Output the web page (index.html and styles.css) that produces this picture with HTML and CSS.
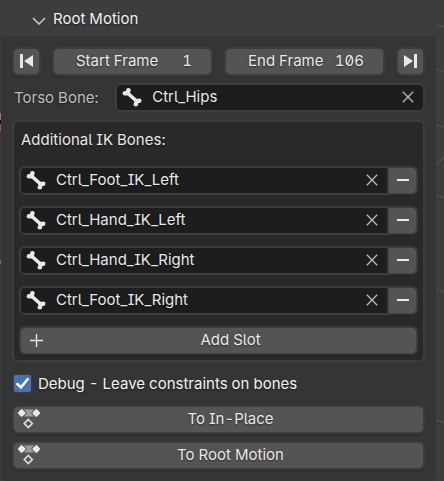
FILE: index.html
```html
<!DOCTYPE html>
<html lang="en">
<head>
<meta charset="utf-8">
<title>Root Motion</title>
<link rel="stylesheet" href="styles.css">
</head>
<body>
<svg class="defs" aria-hidden="true">
  <symbol id="bone" viewBox="0 0 20 20"><path d="M5.5 6 15 14.5" stroke="currentColor" stroke-width="3.6"/><g fill="currentColor"><circle cx="6.4" cy="3.2" r="2.3"/><circle cx="2.9" cy="6.2" r="2.3"/><circle cx="17.2" cy="13.8" r="2.3"/><circle cx="13.8" cy="17.2" r="2.3"/><path d="M3 4.500 6.500 3 8.500 6 6 8.500 3 8.300zM12 14.500 14.500 11.800 17.500 12 17 16 14 17.500z"/></g></symbol>
  <symbol id="cross" viewBox="0 0 12 12"><path d="M.8.8 11.200 11.200M11.200.8.8 11.200" stroke="currentColor" stroke-width="1.300"/></symbol>
  <symbol id="minus" viewBox="0 0 12 12"><path d="M0 6h12" stroke="currentColor" stroke-width="2"/></symbol>
  <symbol id="keys" viewBox="0 0 22 20"><path d="M4 .5h14v7H4z" fill="#9c9c9c"/><path d="M3.500 0h2L9 4 5.500 8h-2zM18.500 0h-2L13 4l3.500 4h2z" fill="#505050"/><path d="M3 .3h1.200L7.500 3.400v1.200L4.200 7.700H3L0 4.600V3.400zM17.800.3H19l3 3.100v1.200l-3 3.100h-1.200l-3.300-3.100V3.400z" fill="#eaeaea"/><path d="M10.300 10.500 14.300 14.500l-4 4-4-4z" fill="none" stroke="#dedede" stroke-width="1.700"/></symbol>
</svg>
<main class="viewport">
  <svg class="grid-lines" viewBox="0 0 8 481" preserveAspectRatio="none" aria-hidden="true"><path d="M0 25l8 2M0 69l8 3M0 125l8 2M0 165l8-8M0 195l8 3M0 289l8 3M0 420l8 3" stroke="#4b4b4b" stroke-width="2"/></svg>
  <section class="panel">
    <h1 class="header"><svg class="chevron" viewBox="0 0 14 8" aria-hidden="true"><path d="M1 1l6 6 6-6" fill="none" stroke="currentColor" stroke-width="1.500"/></svg>Root Motion</h1>
    <div class="content">
      <div class="row frames">
        <button class="btn square" aria-label="Jump to start"><svg viewBox="0 0 13 14"><path d="M0 0h3v14H0zM13 1v12L4 7z" fill="currentColor"/></svg></button>
        <label class="btn number">Start Frame<input type="text" value="1"></label>
        <label class="btn number">End Frame<input type="text" value="106"></label>
        <button class="btn square" aria-label="Jump to end"><svg viewBox="0 0 13 14"><path d="M10 0h3v14h-3zM0 1v12l9-6z" fill="currentColor"/></svg></button>
      </div>
      <div class="row torso">
        <label class="muted" for="torso">Torso Bone:</label>
        <div class="field"><svg class="bone"><use href="#bone"/></svg><input id="torso" type="text" value="Ctrl_Hips"><button class="clear" aria-label="Clear"><svg><use href="#cross"/></svg></button></div>
      </div>
      <div class="box">
        <h2>Additional IK Bones:</h2>
        <div class="slots">
          <div class="slot"><div class="field"><svg class="bone"><use href="#bone"/></svg><input type="text" aria-label="Bone 1" value="Ctrl_Foot_IK_Left"><button class="clear" aria-label="Clear"><svg><use href="#cross"/></svg></button></div><button class="btn remove" aria-label="Remove"><svg><use href="#minus"/></svg></button></div>
          <div class="slot"><div class="field"><svg class="bone"><use href="#bone"/></svg><input type="text" aria-label="Bone 2" value="Ctrl_Hand_IK_Left"><button class="clear" aria-label="Clear"><svg><use href="#cross"/></svg></button></div><button class="btn remove" aria-label="Remove"><svg><use href="#minus"/></svg></button></div>
          <div class="slot"><div class="field"><svg class="bone"><use href="#bone"/></svg><input type="text" aria-label="Bone 3" value="Ctrl_Hand_IK_Right"><button class="clear" aria-label="Clear"><svg><use href="#cross"/></svg></button></div><button class="btn remove" aria-label="Remove"><svg><use href="#minus"/></svg></button></div>
          <div class="slot"><div class="field"><svg class="bone"><use href="#bone"/></svg><input type="text" aria-label="Bone 4" value="Ctrl_Foot_IK_Right"><button class="clear" aria-label="Clear"><svg><use href="#cross"/></svg></button></div><button class="btn remove" aria-label="Remove"><svg><use href="#minus"/></svg></button></div>
          <button class="btn wide"><svg class="plus" viewBox="0 0 13 13"><path d="M0 6.500h13M6.500 0v13" stroke="currentColor" stroke-width="1.400"/></svg><span>Add Slot</span></button>
        </div>
      </div>
      <label class="check"><input type="checkbox" checked>Debug - Leave constraints on bones</label>
      <div class="actions">
        <button class="btn wide"><svg class="keys"><use href="#keys"/></svg><span>To In-Place</span></button>
        <button class="btn wide"><svg class="keys"><use href="#keys"/></svg><span>To Root Motion</span></button>
      </div>
    </div>
  </section>
</main>
</body>
</html>
```
FILE: styles.css
```css
* { box-sizing: border-box; }
body {
  margin: 0;
  background: #3d3d3d;
  color: #e8e8e8;
  font: 15px/20px Inter, sans-serif;
  font-feature-settings: "tnum", "ss02", "zero" 0;
  text-shadow: 0 1px 2px rgba(0, 0, 0, .5);
}
button, input { font: inherit; font-feature-settings: inherit; color: inherit; text-shadow: inherit; }
svg { display: block; flex: none; }
.defs { position: absolute; width: 0; height: 0; }
.viewport {
  position: relative;
  padding: 0 8px 0 1px;
  min-height: 100vh;
  background: linear-gradient(#3d3d3d 113px, #a86a62 113px 120px, #111 120px 124px, #8a5a54 124px 131px, #3d3d3d 131px 260px, #5f8a1e 260px 264px, #3d3d3d 264px);
}
.viewport::after {
  content: "";
  position: absolute;
  inset: 0 0 0 auto;
  width: 8px;
  background: #3d3d3d;
}
.grid-lines { position: absolute; z-index: 1; top: 0; right: 0; width: 8px; height: 100%; }
.panel { min-height: 100vh; background: #353535; border-radius: 0 0 5px 5px; }
.header {
  display: flex;
  align-items: center;
  gap: 7px;
  height: 36px;
  margin: 0;
  padding: 1px 0 0 31px;
  background: #3d3d3d;
  color: #f2f2f2;
  font-size: 15px;
  font-weight: 400;
}
.chevron { width: 14px; height: 8px; color: #ccc; margin-top: 4px; }
.content { padding: 11px; }
.row { display: flex; align-items: center; }
.frames { gap: 11px; }
.btn {
  display: flex;
  align-items: center;
  justify-content: center;
  height: 29px;
  padding: 0 0 1px;
  background: #545454;
  background-clip: padding-box;
  border: 2px solid #3d3d3d;
  border-radius: 6px;
  box-shadow: 0 1px 1px rgba(0, 0, 0, .2);
}
.square { flex: none; width: 29px; }
.square svg { width: 13px; height: 14px; }
.number { flex: 1 1 0; min-width: 0; justify-content: space-between; padding: 0 19px 1px 22px; white-space: nowrap; }
.number input { width: 32px; padding: 0; border: 0; background: none; text-align: right; outline: none; }
.torso { margin-top: 7px; }
.muted { flex: 0 0 25%; padding-left: 2px; color: #bdbdbd; white-space: nowrap; }
.field {
  display: flex;
  align-items: center;
  flex: 1;
  min-width: 0;
  height: 29px;
  padding: 0 9px 1px 5px;
  background: #1d1d1d;
  border: 2px solid #3d3d3d;
  border-radius: 6px;
}
.field input { flex: 1; min-width: 0; padding: 0; margin-left: 10px; border: 0; background: none; outline: none; }
.bone { width: 20px; height: 20px; }
.clear { padding: 0; border: 0; background: none; color: #b8b8b8; }
.clear svg { width: 12px; height: 12px; }
.box {
  margin-top: 8px;
  padding: 5px;
  background: #292929;
  border: 2px solid #3d3d3d;
  border-radius: 6px;
}
.box h2 { margin: 3px 2px 16px; font-size: 15px; font-weight: 400; line-height: 20px; }
.slots { display: grid; gap: 11px; }
.slot { display: flex; }
.slot .field { border-radius: 6px 0 0 6px; }
.remove { width: 29px; border-left: 0; border-radius: 0 6px 6px 0; }
.remove svg { width: 12px; height: 12px; }
.wide { width: 100%; display: grid; grid-template-columns: 32px 1fr 8px; }
.wide span { text-align: center; }
.plus { width: 13px; height: 13px; margin-left: 9px; }
.keys { width: 22px; height: 20px; margin-left: 4px; }
.check { display: flex; align-items: center; gap: 7px; height: 43px; padding-left: 2px; color: #f2f2f2; }
.check input {
  appearance: none;
  display: grid;
  place-items: center;
  width: 17px;
  height: 17px;
  margin: 0;
  background: #4772b3;
  border-radius: 2px;
  box-shadow: 0 0 0 1px #3d3d3d;
}
.check input::before {
  content: "";
  width: 14px;
  height: 12px;
  background: #fff;
  clip-path: polygon(0 55%, 15% 42%, 38% 66%, 84% 2%, 100% 12%, 40% 98%);
}
.actions { display: grid; gap: 7px; }
```
